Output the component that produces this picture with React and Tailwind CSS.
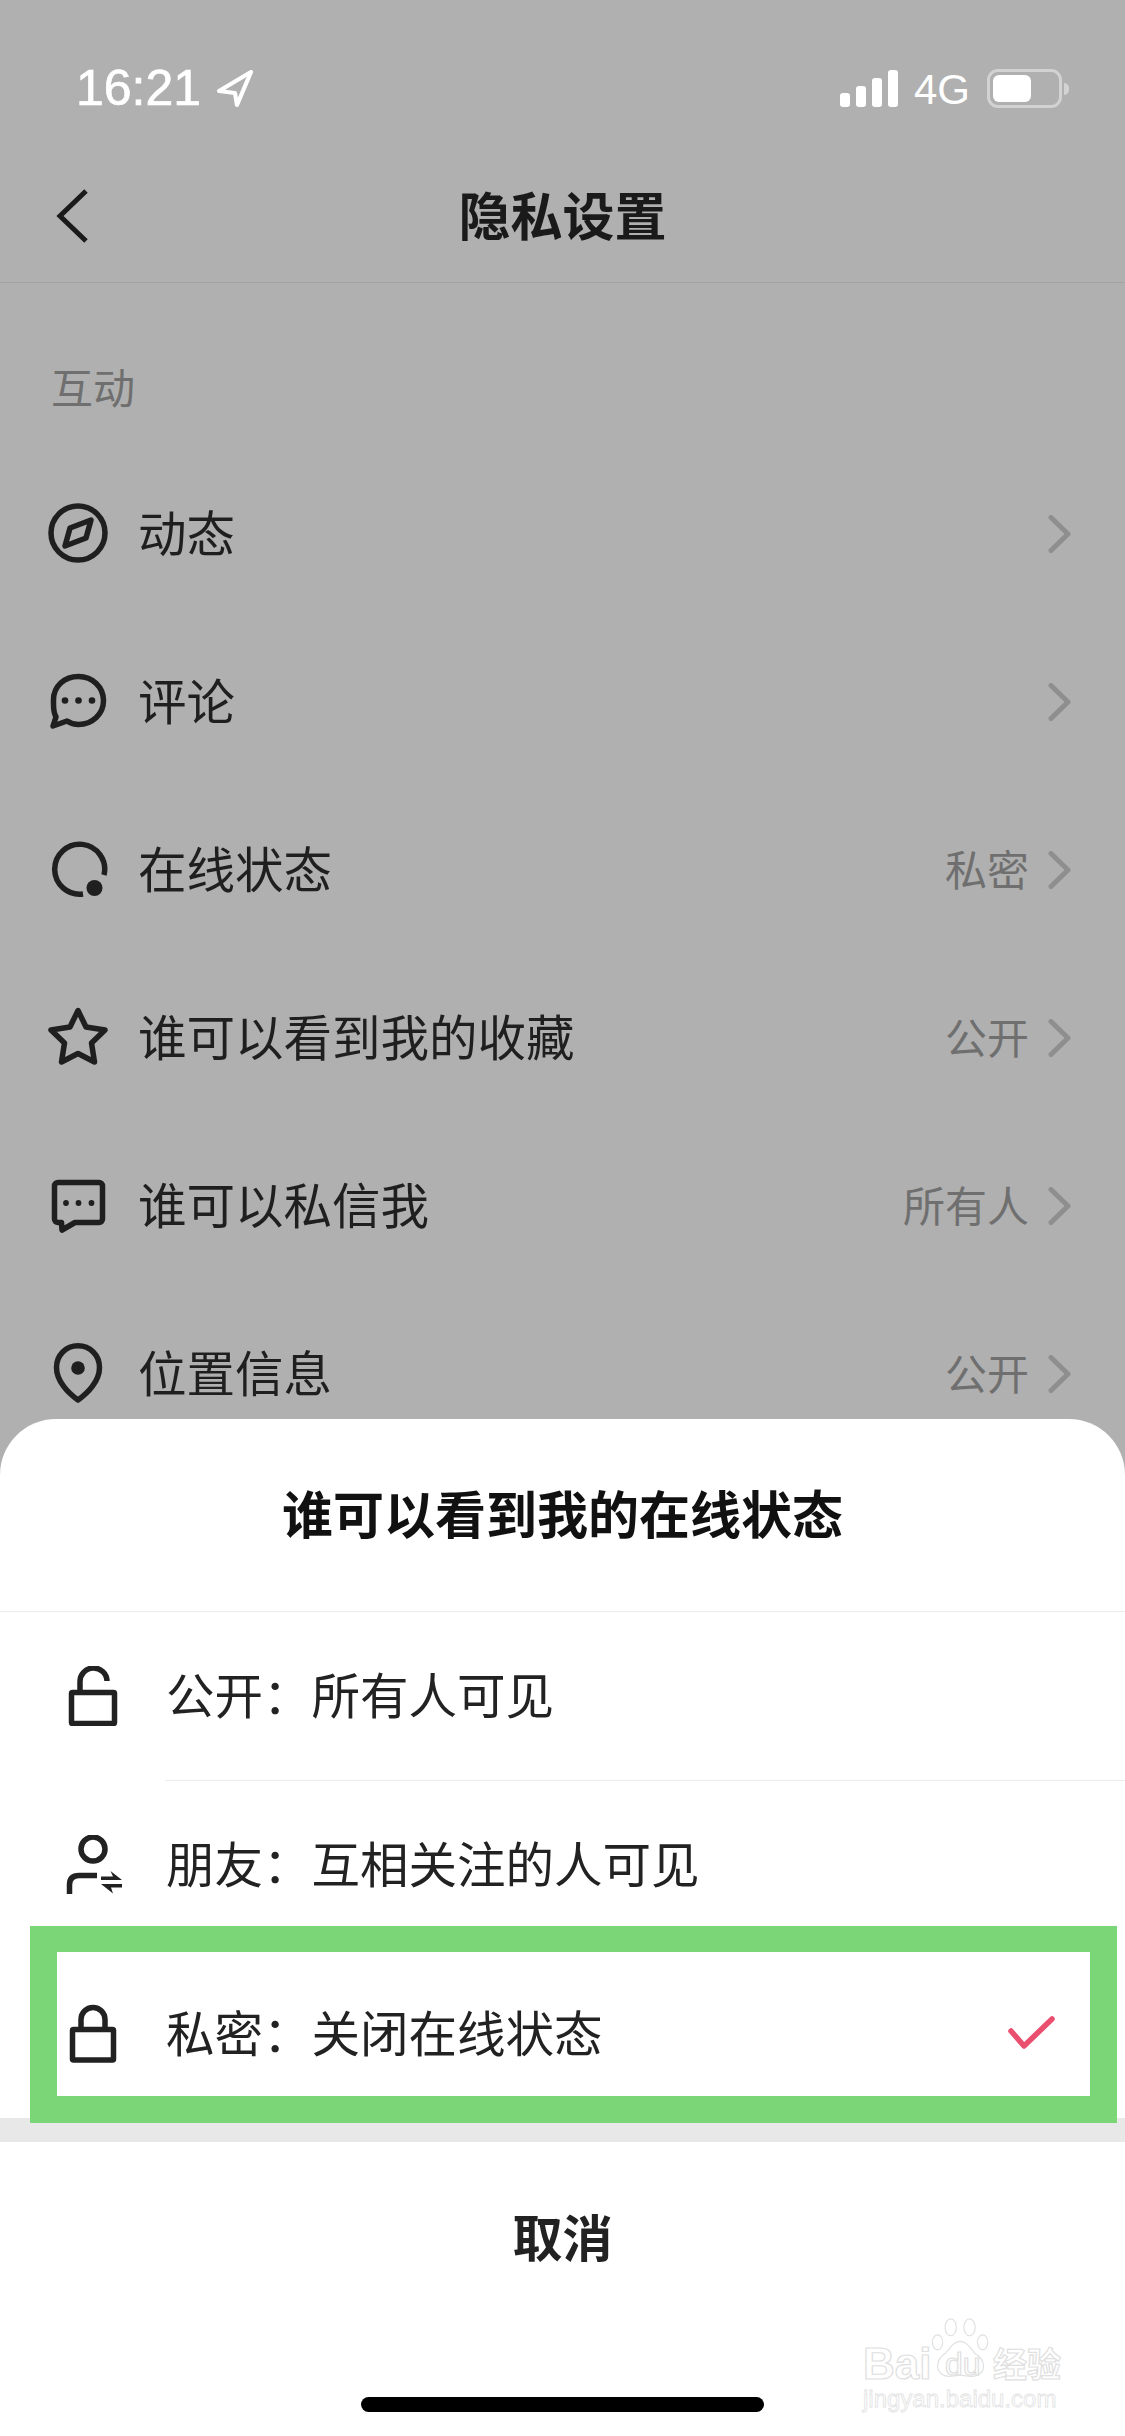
const cjk = { fontFamily: '"Noto Sans CJK SC", "Noto Sans", sans-serif' };

const Ic = ({ children, className = "" }) => (
  <svg viewBox="0 0 60 60" className={`w-[60px] h-[60px] shrink-0 ${className}`} fill="none" stroke="currentColor" strokeWidth="5.5" strokeLinecap="round" strokeLinejoin="round">
    {children}
  </svg>
);

const Compass = () => (
  <Ic><circle cx="30" cy="30" r="27" /><path d="M43 17 L38 35 L17 43 L22 25 Z" strokeWidth="5.5" /></Ic>
);
const Comment = () => (
  <Ic>
    <path d="M8 46 C5 41 5.500 36 5.500 29 C5.500 15 16.500 5.500 30.500 5.500 C44.500 5.500 55.500 16 55.500 29.500 C55.500 43 44.500 53.500 30.500 53.500 C26 53.500 22 52 19 50 L5 55 Z" />
    <g fill="currentColor" stroke="none"><circle cx="17" cy="29.500" r="3.300" /><circle cx="30.500" cy="29.500" r="3.300" /><circle cx="44" cy="29.500" r="3.300" /></g>
  </Ic>
);
const Online = () => (
  <Ic>
    <path d="M35 55 A25 25 0 1 1 56 36" strokeLinecap="butt" />
    <circle cx="46.500" cy="49" r="8" fill="currentColor" stroke="none" />
  </Ic>
);
const Star = () => (
  <Ic>
    <path d="M30 3.500 L38 20 L57 23 L43.500 36 L46.500 55 L30 46.500 L13.500 55 L16.500 36 L3 23 L22 20 Z" />
  </Ic>
);
const Dm = () => (
  <Ic>
    <path d="M10 7.500 H51 A3.500 3.500 0 0 1 54.500 11 V44 A3.500 3.500 0 0 1 51 47.500 H27 L14 55 L13.500 47.500 H10 A3.500 3.500 0 0 1 6.500 44 V11 A3.500 3.500 0 0 1 10 7.500 Z" />
    <g fill="currentColor" stroke="none"><circle cx="18" cy="28" r="2.900" /><circle cx="30.500" cy="28" r="2.900" /><circle cx="43.500" cy="28" r="2.900" /></g>
  </Ic>
);
const Pin = () => (
  <Ic>
    <path d="M30 57 C20 50 8.500 38 8.500 24.500 C8.500 12 18 2.800 30 2.800 C42 2.800 51.500 12 51.500 24.500 C51.500 38 40 50 30 57 Z" />
    <circle cx="30" cy="25" r="6.800" fill="currentColor" stroke="none" />
  </Ic>
);

const UnlockIcon = () => (
  <Ic>
    <rect x="8.500" y="26.500" width="43" height="31" rx="1" />
    <path d="M17 24 V16 A13.500 13.500 0 0 1 44 15" strokeLinecap="butt" />
  </Ic>
);
const LockIcon = () => (
  <Ic>
    <rect x="9.500" y="25.500" width="41" height="30.500" rx="1" />
    <path d="M18 24 V15.500 A12 12 0 0 1 42 15.500 V24" strokeLinecap="butt" />
  </Ic>
);
const FriendIcon = () => (
  <Ic>
    <circle cx="30" cy="14" r="12" />
    <path d="M6.500 59 V50 Q6.500 40.500 16 40.500 H34" strokeLinecap="butt" />
    <g fill="currentColor" stroke="none">
      <path d="M38 41.500 H50 L47.500 36 L59 45 H38 Z" />
      <path d="M38 49 H59 V52.500 H48 L50 58.500 Z" />
    </g>
  </Ic>
);

const Row = ({ icon, label, value }) => (
  <div className="h-[168px] flex items-center pl-[48px] pr-[53px] text-[#1f1f1f]">
    {icon}
    <span className="ml-[30px] pb-[5px] text-[48.5px] leading-[60px]">{label}</span>
    {value && <span className="ml-auto pb-[2px] text-[42px] leading-[60px] text-[#6f6f6f]">{value}</span>}
    <svg viewBox="0 0 24 38" className={`w-[24px] h-[38px] mt-[1px] text-[#8e8e8e] ${value ? "ml-[19px]" : "ml-auto"}`} fill="none" stroke="currentColor" strokeWidth="5" strokeLinecap="round" strokeLinejoin="round">
      <path d="M3 2.500 L20 19 L3 35.500" />
    </svg>
  </div>
);

const SheetRow = ({ icon, label, children }) => (
  <div className="relative h-full flex items-center pl-[63px] text-[#222222]">
    {icon}
    <span className="ml-[43px] pb-[6px] text-[48.5px] leading-[60px]">{label}</span>
    {children}
  </div>
);

const Watermark = () => (
  <div className="absolute left-[863px] top-[2315px] w-[202px] h-[98px] z-20 text-transparent [-webkit-text-stroke:1.2px_#e0e0e0]" style={{ fontFamily: '"Liberation Sans", sans-serif' }}>
    <span className="absolute left-0 top-[27px] text-[44px] leading-[44px] font-bold">Bai</span>
    <svg viewBox="0 0 66 66" className="absolute left-[68px] top-0 w-[62px] h-[66px] text-[#e0e0e0]" fill="#ffffff" stroke="currentColor" strokeWidth="1.200">
      <ellipse cx="7" cy="27" rx="5.500" ry="8" />
      <ellipse cx="21" cy="11" rx="6" ry="9" />
      <ellipse cx="41" cy="11" rx="6" ry="9" />
      <ellipse cx="55" cy="27" rx="5.500" ry="8" />
      <path d="M31 26 C24 26 20 33 16 38 C10 42 7 46 7 52 C7 60 14 64 22 63 C27 62 35 62 40 63 C49 64 56 60 56 52 C56 46 52 42 46 38 C42 33 38 26 31 26 Z" />
    </svg>
    <span className="absolute left-[82px] top-[31px] text-[32px] leading-[36px]">du</span>
    <span className="absolute left-[130px] top-[26px] text-[34px] leading-[44px] font-bold whitespace-nowrap" style={cjk}>经验</span>
    <span className="absolute left-0 top-[71px] text-[24px] leading-[26px] whitespace-nowrap [-webkit-text-stroke:0.8px_#e2e2e2]">jingyan.baidu.com</span>
  </div>
);

export default function App() {
  return (
    <div className="relative w-[1125px] h-[2436px] overflow-hidden bg-[#b0b0b0]" style={cjk}>
      {/* status bar */}
      <div className="h-[152px] pt-[62px] pl-[76px] pr-[56px] flex items-start text-white" style={{ fontFamily: '"Liberation Sans", sans-serif' }}>
        <span className="text-[50px] leading-[52px] w-[139px] whitespace-nowrap [-webkit-text-stroke:0.7px_#ffffff]">16:21</span>
        <svg viewBox="0 0 40 40" className="w-[40px] h-[40px] mt-[7px]" fill="none" stroke="currentColor" strokeWidth="4.2" strokeLinejoin="round">
          <path d="M36 3 L4 22 L20 24 L22 36 Z" />
        </svg>
        <div className="ml-auto flex items-end gap-[6px] h-[37px] mt-[8px]">
          <div className="w-[10px] h-[14px] rounded-[3px] bg-white" />
          <div className="w-[10px] h-[21px] rounded-[3px] bg-white" />
          <div className="w-[10px] h-[29px] rounded-[3px] bg-white" />
          <div className="w-[10px] h-[37px] rounded-[3px] bg-white" />
        </div>
        <span className="ml-[16px] text-[42px] leading-[46px] mt-[5px]">4G</span>
        <div className="ml-[17px] mt-[7px] w-[75px] h-[39px] rounded-[11px] border-[3px] border-[#d2d2d2] p-[3px]">
          <div className="w-[38px] h-full rounded-[6px] bg-white" />
        </div>
        <div className="ml-[2px] mt-[21px] w-[5px] h-[12px] rounded-r-full bg-[#d2d2d2]" />
      </div>

      {/* nav bar */}
      <div className="relative h-[131px] border-b border-[#a2a2a2] flex items-center justify-center pb-[7px]">
        <svg viewBox="0 0 32 54" className="absolute left-[56px] top-[37px] w-[32px] h-[54px] text-[#1a1a1a]" fill="none" stroke="currentColor" strokeWidth="5" strokeLinejoin="miter">
          <path d="M30 2 L4 27 L30 52" />
        </svg>
        <span className="text-[52px] leading-[60px] font-bold text-[#1a1a1a]">隐私设置</span>
      </div>

      {/* section */}
      <div className="h-[166px] pt-[74px] pl-[51px]">
        <span className="block text-[42px] leading-[58px] text-[#6f6f6f]">互动</span>
      </div>
      <Row icon={<Compass />} label="动态" />
      <Row icon={<Comment />} label="评论" />
      <Row icon={<Online />} label="在线状态" value="私密" />
      <Row icon={<Star />} label="谁可以看到我的收藏" value="公开" />
      <Row icon={<Dm />} label="谁可以私信我" value="所有人" />
      <Row icon={<Pin />} label="位置信息" value="公开" />

      {/* bottom sheet */}
      <div className="absolute inset-x-0 bottom-0 bg-white rounded-t-[56px]">
        <div className="h-[193px] border-b border-[#ececec] flex items-center justify-center pb-[6px]">
          <span className="text-[51px] leading-[60px] font-bold text-[#111111]">谁可以看到我的在线状态</span>
        </div>
        <div className="h-[168px]"><SheetRow icon={<UnlockIcon />} label="公开：所有人可见" /></div>
        <div className="h-px ml-[165px] bg-[#ececec]" />
        <div className="h-[168px]"><SheetRow icon={<FriendIcon />} label="朋友：互相关注的人可见" /></div>
        <div className="h-[169px]">
          <SheetRow icon={<LockIcon />} label="私密：关闭在线状态">
            <svg viewBox="0 0 47 34" className="absolute left-[1008px] top-[67px] w-[47px] h-[34px] text-[#ea4f6f]" fill="none" stroke="currentColor" strokeWidth="5.500" strokeLinecap="round" strokeLinejoin="round">
              <path d="M3 15 L16 30 L44 3" />
            </svg>
            <div className="absolute left-[30px] right-[8px] -top-[23px] -bottom-[5px] border-[27px] border-t-[26px] border-[#7bd678] z-10" />
          </SheetRow>
        </div>
        <div className="h-[24px] bg-[#e8e8e8]" />
        <div className="h-[294px]">
          <div className="h-[192px] flex items-center justify-center pb-[6px]">
            <span className="text-[50px] leading-[60px] font-bold text-[#222222]">取消</span>
          </div>
          <div className="mt-[63px] mx-auto w-[403px] h-[15px] rounded-full bg-black" />
        </div>
      </div>
      <Watermark />
    </div>
  );
}
